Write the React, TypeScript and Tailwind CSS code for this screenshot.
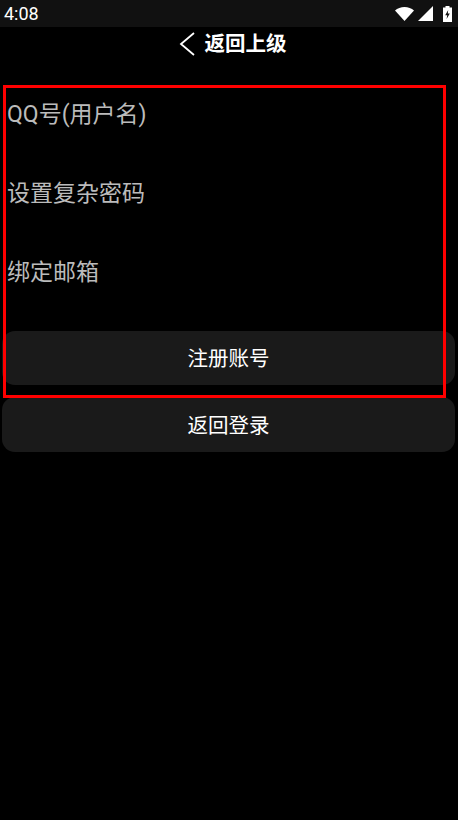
import React from "react";

const FONT = "font-['Roboto','Noto_Sans_CJK_SC',sans-serif]";

function StatusIcons() {
  return (
    <div className="flex items-center gap-[4px]">
      <svg width="19" height="14" viewBox="0 0 19 14">
        <path d="M0 3.5C2.5 1.3 5.8 0 9.5 0s7 1.3 9.5 3.5L9.5 14z" fill="#fff" />
      </svg>
      <svg width="15" height="15" viewBox="0 0 15 15">
        <path d="M15 0v15H0z" fill="#fff" />
      </svg>
      <svg width="9" height="16" viewBox="0 0 9 16" className="ml-[6px]">
        <path
          fillRule="evenodd"
          d="M2.5 0h4v1.5H9V16H0V1.5h2.5zM5.2 4 2.2 9.2h2L3.6 13l3.2-5.4h-2z"
          fill="#fff"
        />
      </svg>
    </div>
  );
}

function Field({ label }: { label: string }) {
  return (
    <div className="flex h-[79px] items-center pl-[7px] text-[23px] leading-none text-[#bbbbbb]">
      {label}
    </div>
  );
}

function Btn({ label }: { label: string }) {
  return (
    <button
      type="button"
      className="flex h-[54.5px] w-[453px] items-center justify-center rounded-[13px] bg-[#1a1a1a] pt-[4px] text-[20.5px] text-white"
    >
      {label}
    </button>
  );
}

export default function App() {
  return (
    <div className={`relative h-[820px] w-[458px] overflow-hidden bg-black ${FONT}`}>
      <div className="flex h-[27px] items-center justify-between bg-[#111111] pl-[4px] pr-[6px]">
        <span className="text-[18px] text-white">4:08</span>
        <StatusIcons />
      </div>

      <div className="flex h-[34px] items-center justify-center gap-[10px] pl-[7px]">
        <svg width="16" height="24" viewBox="0 0 16 24" fill="none">
          <path d="M15 1 2 12l13 11" stroke="#fff" strokeWidth="1.8" />
        </svg>
        <span className="text-[20.5px] font-bold text-white">返回上级</span>
      </div>

      <div className="mt-[13.5px]">
        <Field label="QQ号(用户名)" />
        <Field label="设置复杂密码" />
        <Field label="绑定邮箱" />
      </div>

      <div className="mt-[19px] flex flex-col gap-[12px] pl-[2px]">
        <Btn label="注册账号" />
        <Btn label="返回登录" />
      </div>

      {/* red highlight drawn on top of the form */}
      <div className="pointer-events-none absolute left-[3px] top-[85px] h-[313px] w-[443px] border-[3px] border-[#ff0000]" />
    </div>
  );
}
